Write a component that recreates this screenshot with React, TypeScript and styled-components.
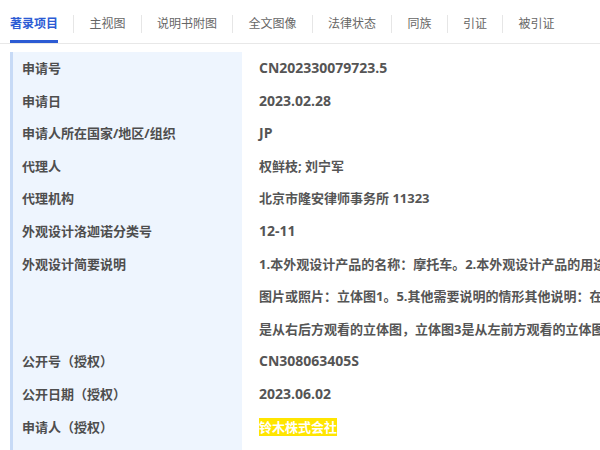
import { Fragment } from 'react';
import styled, { createGlobalStyle } from 'styled-components';

const GlobalStyle = createGlobalStyle`
  html, body {
    margin: 0;
    padding: 0;
    overflow: hidden;
    background: #fff;
  }
  body {
    font-family: "Open Sans", "Noto Sans CJK SC", sans-serif;
  }
`;

const Page = styled.div`
  width: 600px;
  height: 450px;
  overflow: hidden;
`;

const TabBar = styled.div`
  display: flex;
  align-items: center;
  gap: 15.25px;
  height: 43px;
  padding-left: 10px;
  border-bottom: 1px solid #e8e8e8;
`;

const Tab = styled.div<{ $active?: boolean }>`
  box-sizing: border-box;
  height: 43px;
  padding-top: 6px;
  display: flex;
  align-items: center;
  font-size: 12px;
  white-space: nowrap;
  color: ${p => (p.$active ? '#2c5bd4' : '#666')};
  font-weight: ${p => (p.$active ? 700 : 400)};
  border-bottom: 3px solid ${p => (p.$active ? '#2c5bd4' : 'transparent')};
`;

const TabDivider = styled.span`
  width: 1px;
  height: 18px;
  margin-top: 5px;
  background: #e6e6e6;
`;

const Table = styled.div`
  margin: 8px 0 0 10px;
  display: grid;
  grid-template-columns: 232px 1fr;
`;

const Label = styled.div`
  box-sizing: border-box;
  background: #eef5fe;
  border-left: 3px solid #c7daf6;
  padding-left: 9px;
  font-size: 13px;
  font-weight: 700;
  line-height: 32.6px;
  color: #4e4e4e;
  white-space: nowrap;
`;

// latin-only values render a touch larger, like the original page's font
const Value = styled.div<{ $latin?: boolean }>`
  padding-left: 17px;
  font-size: ${p => (p.$latin ? '14px' : '13px')};
  font-weight: 700;
  line-height: 32.6px;
  color: #555;
  white-space: nowrap;
`;

const Line = styled.div``;

const Highlight = styled.span`
  background: #ffe500;
  color: #fff;
`;

const tabs = ['著录项目', '主视图', '说明书附图', '全文图像', '法律状态', '同族', '引证', '被引证'];

const description = [
  '1.本外观设计产品的名称：摩托车。2.本外观设计产品的用途：用于骑乘。3.本外观设计产品的设计要点：在于形状。4.最能表明设计要点的',
  '图片或照片：立体图1。5.其他需要说明的情形其他说明：在立体图中，立体图1是从右前方观看的立体图，立体图2',
  '是从右后方观看的立体图，立体图3是从左前方观看的立体图，立体图4是从左后方观看的立体图。',
];

const rows: { label: string; value: React.ReactNode; latin?: boolean }[] = [
  { label: '申请号', value: 'CN202330079723.5', latin: true },
  { label: '申请日', value: '2023.02.28', latin: true },
  { label: '申请人所在国家/地区/组织', value: 'JP', latin: true },
  { label: '代理人', value: '权鲜枝; 刘宁军' },
  { label: '代理机构', value: '北京市隆安律师事务所 11323' },
  { label: '外观设计洛迦诺分类号', value: '12-11', latin: true },
  {
    label: '外观设计简要说明',
    value: description.map((l, i) => <Line key={i}>{l}</Line>),
  },
  { label: '公开号（授权）', value: 'CN308063405S', latin: true },
  { label: '公开日期（授权）', value: '2023.06.02', latin: true },
  { label: '申请人（授权）', value: <Highlight>铃木株式会社</Highlight> },
  { label: '申请人地址（授权）', value: '日本国静冈县滨松市' },
];

export default function App() {
  return (
    <Page>
      <GlobalStyle />
      <TabBar>
        {tabs.map((t, i) => (
          <Fragment key={t}>
            {i > 0 && <TabDivider />}
            <Tab $active={i === 0}>{t}</Tab>
          </Fragment>
        ))}
      </TabBar>
      <Table>
        {rows.map(r => (
          <Fragment key={r.label}>
            <Label>{r.label}</Label>
            <Value $latin={r.latin}>{r.value}</Value>
          </Fragment>
        ))}
      </Table>
    </Page>
  );
}
